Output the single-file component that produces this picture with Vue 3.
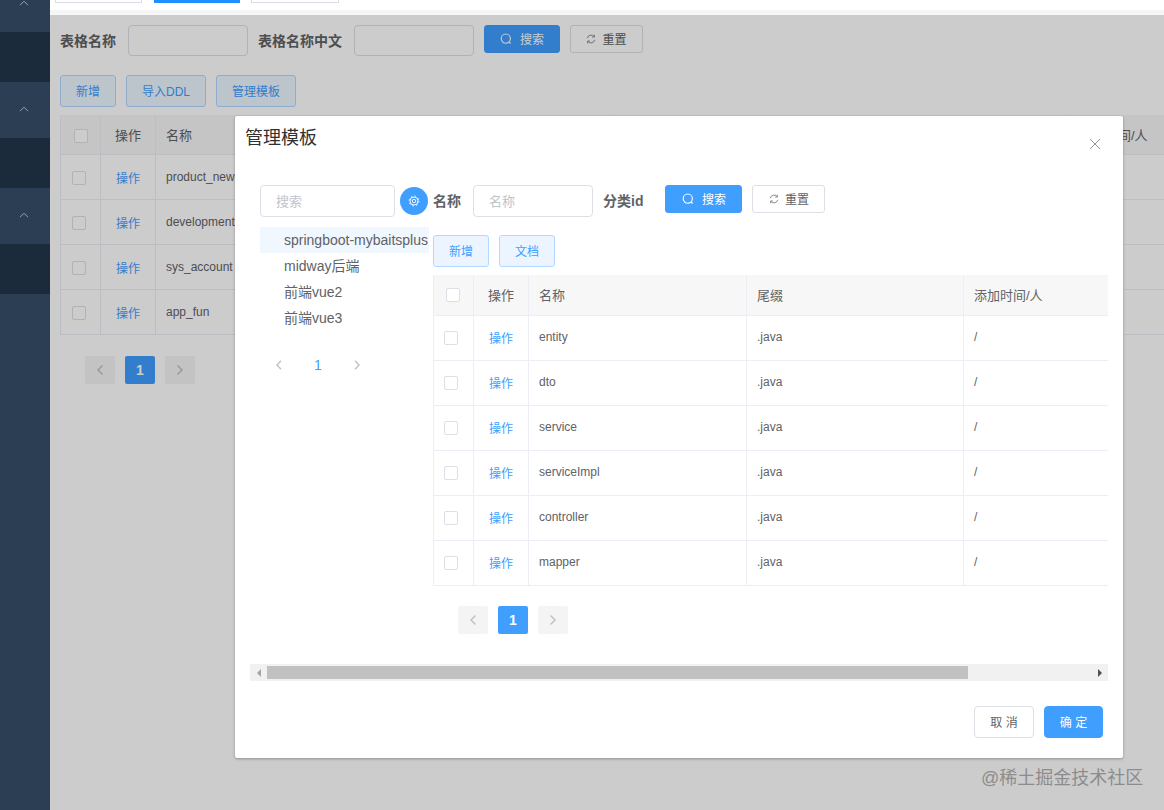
<script setup>
const sideBlocks = [
  { cls: 'light', h: 32, chevron: 'chev-top' },
  { cls: 'dark', h: 50 },
  { cls: 'light', h: 56, chevron: 'chev-mid' },
  { cls: 'dark', h: 50 },
  { cls: 'light', h: 56, chevron: 'chev-mid' },
  { cls: 'dark', h: 50 },
  { cls: 'light', h: 516 }
]
const bgRows = ['product_new', 'development', 'sys_account', 'app_fun']
const tplRows = ['entity', 'dto', 'service', 'serviceImpl', 'controller', 'mapper']
const tree = ['springboot-mybaitsplus', 'midway后端', '前端vue2', '前端vue3']
</script>

<template>
  <div class="page">
    <aside class="side">
      <div v-for="(b, i) in sideBlocks" :key="i" class="side-block" :class="[b.cls, 'h' + b.h]">
        <svg v-if="b.chevron" class="side-chev" :class="b.chevron" width="10" height="6" viewBox="0 0 10 6">
          <path d="M1 5.2 5 1.2l4 4" fill="none" stroke="#c3cbd6" stroke-width="1" />
        </svg>
      </div>
    </aside>

    <main class="main">
      <div class="content">
        <div class="form-row">
          <label class="lbl">表格名称</label>
          <div class="inp w120"></div>
          <label class="lbl second">表格名称中文</label>
          <div class="inp w120"></div>
          <button class="btn primary search-bg">
            <svg class="ic" width="12" height="12" viewBox="0 0 12 12"><circle cx="5.8" cy="5.6" r="4.6" fill="none" stroke="currentColor" stroke-width="1.1" /><path d="M9.2 9 10.6 10.5" stroke="currentColor" stroke-width="1.1" /></svg>
            搜索
          </button>
          <button class="btn reset-bg">
            <svg class="ic" width="10" height="10" viewBox="0 0 12 12"><path d="M1.6 5A4.6 4.6 0 0 1 9.8 3.2M10.4 7A4.6 4.6 0 0 1 2.2 8.8" fill="none" stroke="currentColor" stroke-width="1.1" /><path d="M10 .8v2.8H7.4M2 11.2V8.4h2.6" fill="none" stroke="currentColor" stroke-width="1.1" /></svg>
            重置
          </button>
        </div>
        <div class="tools bg-tools">
          <button class="btn plain w56">新增</button>
          <button class="btn plain w80">导入DDL</button>
          <button class="btn plain w80">管理模板</button>
        </div>
        <div class="table bg-table">
          <div class="tr th bg-cols">
            <div class="td center"><span class="cb head-cb"></span></div>
            <div class="td center">操作</div>
            <div class="td pad">名称</div>
            <div class="td pad"></div>
            <div class="td pad">添加时间/人</div>
          </div>
          <div v-for="r in bgRows" :key="r" class="tr bg-cols">
            <div class="td center"><span class="cb row-cb"></span></div>
            <div class="td center link">操作</div>
            <div class="td pad">{{ r }}</div>
            <div class="td pad"></div>
            <div class="td pad"></div>
          </div>
        </div>
        <div class="pager bg-pager">
          <span class="pg"><svg width="8" height="12" viewBox="0 0 8 12"><path d="M6.5 1.5 2 6l4.5 4.5" fill="none" stroke="currentColor" stroke-width="1.6" /></svg></span>
          <span class="pg active">1</span>
          <span class="pg"><svg width="8" height="12" viewBox="0 0 8 12"><path d="M1.5 1.5 6 6l-4.5 4.5" fill="none" stroke="currentColor" stroke-width="1.6" /></svg></span>
        </div>
      </div>
    </main>

    <div class="mask"></div>

    <header class="topbar">
      <span class="tab tab-a"></span>
      <span class="tab tab-b"></span>
      <span class="tab tab-c"></span>
    </header>

    <section class="modal">
      <div class="m-head">管理模板</div>
      <svg class="close" width="12" height="12" viewBox="0 0 12 12"><path d="M1 1l10 10M11 1 1 11" stroke="#909399" stroke-width="1" fill="none" /></svg>

      <div class="m-scroll">
        <div class="m-content">
          <div class="left">
            <div class="left-top">
              <div class="inp w135"><span class="ph">搜索</span></div>
              <span class="gear">
                <svg width="12" height="12" viewBox="0 0 12 12"><circle cx="6" cy="6" r="4" fill="none" stroke="#fff" stroke-width=".9" /><circle cx="6" cy="6" r="4.9" fill="none" stroke="#fff" stroke-width="1" stroke-dasharray="1.5 2.35" /><circle cx="6" cy="6" r="1.7" fill="none" stroke="#fff" stroke-width=".9" /></svg>
              </span>
            </div>
            <ul class="tree">
              <li v-for="(t, i) in tree" :key="t" :class="{ current: i === 0 }">{{ t }}</li>
            </ul>
            <div class="mini-pager">
              <span><svg width="8" height="12" viewBox="0 0 8 12"><path d="M6 1.8 2 6l4 4.2" fill="none" stroke="#c0c4cc" stroke-width="1.5" /></svg></span>
              <span class="mini-num">1</span>
              <span><svg width="8" height="12" viewBox="0 0 8 12"><path d="M2 1.8 6 6l-4 4.2" fill="none" stroke="#c0c4cc" stroke-width="1.5" /></svg></span>
            </div>
          </div>

          <div class="right">
            <div class="form-row">
              <label class="lbl">名称</label>
              <div class="inp w120 tall"><span class="ph">名称</span></div>
              <label class="lbl second cat">分类id</label>
              <button class="btn primary search-m">
                <svg class="ic" width="12" height="12" viewBox="0 0 12 12"><circle cx="5.8" cy="5.6" r="4.6" fill="none" stroke="currentColor" stroke-width="1.1" /><path d="M9.2 9 10.6 10.5" stroke="currentColor" stroke-width="1.1" /></svg>
                搜索
              </button>
              <button class="btn reset-bg">
                <svg class="ic" width="10" height="10" viewBox="0 0 12 12"><path d="M1.6 5A4.6 4.6 0 0 1 9.8 3.2M10.4 7A4.6 4.6 0 0 1 2.2 8.8" fill="none" stroke="currentColor" stroke-width="1.1" /><path d="M10 .8v2.8H7.4M2 11.2V8.4h2.6" fill="none" stroke="currentColor" stroke-width="1.1" /></svg>
                重置
              </button>
            </div>
            <div class="tools m-tools">
              <button class="btn plain w56">新增</button>
              <button class="btn plain w56">文档</button>
            </div>
            <div class="table m-table">
              <div class="tr th m-cols">
                <div class="td center"><span class="cb head-cb"></span></div>
                <div class="td center">操作</div>
                <div class="td pad">名称</div>
                <div class="td pad">尾缀</div>
                <div class="td pad">添加时间/人</div>
              </div>
              <div v-for="r in tplRows" :key="r" class="tr m-cols">
                <div class="td center"><span class="cb row-cb"></span></div>
                <div class="td center link">操作</div>
                <div class="td pad">{{ r }}</div>
                <div class="td pad">.java</div>
                <div class="td pad">/</div>
              </div>
            </div>
            <div class="pager m-pager">
              <span class="pg"><svg width="8" height="12" viewBox="0 0 8 12"><path d="M6.5 1.5 2 6l4.5 4.5" fill="none" stroke="currentColor" stroke-width="1.6" /></svg></span>
              <span class="pg active">1</span>
              <span class="pg"><svg width="8" height="12" viewBox="0 0 8 12"><path d="M1.5 1.5 6 6l-4.5 4.5" fill="none" stroke="currentColor" stroke-width="1.6" /></svg></span>
            </div>
          </div>
        </div>
        <div class="scrollbar">
          <span class="sb-btn"><i class="arrow-l"></i></span>
          <span class="sb-thumb"></span>
          <span class="sb-rest"></span>
          <span class="sb-btn"><i class="arrow-r"></i></span>
        </div>
      </div>

      <div class="m-foot">
        <button class="btn foot">取 消</button>
        <button class="btn foot primary ok">确 定</button>
      </div>
    </section>

    <div class="watermark">@稀土掘金技术社区</div>
  </div>
</template>

<style>
html, body { margin: 0; overflow: hidden; }
</style>

<style scoped>
.page {
  position: relative;
  width: 1164px;
  height: 810px;
  overflow: hidden;
  display: flex;
  background: #fff;
  font-family: "Liberation Sans", "Noto Sans CJK SC", sans-serif;
  font-size: 12px;
  color: #606266;
}
.side { width: 50px; flex: none; display: flex; flex-direction: column; }
.side-block { position: relative; display: flex; justify-content: center; }
.light { background: #384e69; }
.dark { background: #23364b; }
.h32 { height: 32px; }
.h50 { height: 50px; }
.h56 { height: 56px; }
.h516 { height: 516px; }
.side-chev { position: absolute; left: 19px; }
.chev-top { top: 0; }
.chev-mid { top: 24px; }

.main { flex: 1; min-width: 0; }
.content { padding: 25px 0 0 10px; }

.topbar {
  position: absolute;
  left: 50px;
  top: 0;
  width: 1114px;
  height: 15px;
  background: linear-gradient(#fff 10px, #f4f4f4 10px, #f8f8f8 15px);
  display: flex;
  padding-left: 5px;
  box-sizing: border-box;
  z-index: 2;
}
.tab {
  display: block;
  height: 3px;
  box-sizing: border-box;
  border: 1px solid #d8dce5;
  border-top: 0;
}
.tab-a { width: 87px; }
.tab-b { background: #1e90ff; border-color: #1e90ff; width: 86px; margin-left: 12px; }
.tab-c { width: 88px; margin-left: 11px; }

.mask {
  position: absolute;
  inset: 0;
  background: rgba(0, 0, 0, .2);
  z-index: 1;
}

.form-row { display: flex; align-items: flex-start; }
.lbl {
  font-size: 14px;
  font-weight: 700;
  line-height: 32px;
  margin-right: 12px;
  white-space: nowrap;
}
.lbl.second { margin-left: 10px; }
.lbl.cat { margin-right: 22px; }
.inp {
  box-sizing: border-box;
  height: 31px;
  border: 1px solid #dcdfe6;
  border-radius: 4px;
  background: #fff;
  display: flex;
  align-items: center;
  padding: 0 0 2px 15px;
  flex: none;
}
.tall, .w135 { height: 32px; }
.w120 { width: 120px; }
.w135 { width: 135px; }
.ph { font-size: 13px; color: #c0c4cc; }

.btn {
  box-sizing: border-box;
  height: 28px;
  border: 1px solid #dcdfe6;
  border-radius: 3px;
  background: #fff;
  color: #606266;
  font: inherit;
  font-size: 12px;
  padding: 0 0 2px;
  display: inline-flex;
  align-items: center;
  justify-content: center;
  white-space: nowrap;
  flex: none;
}
.primary { background: #409eff; border-color: #409eff; color: #fff; }
.ic { margin: 2px 8px 0 0; flex: none; }
.search-bg { width: 76px; margin-left: 10px; }
.search-m { width: 77px; }
.reset-bg { width: 73px; margin-left: 10px; }
.reset-bg .ic { margin-right: 6px; color: #7d8087; }
.plain {
  height: 32px;
  background: #ecf5ff;
  border-color: #b3d8ff;
  color: #409eff;
}
.w56 { width: 56px; }
.w80 { width: 80px; }
.tools { display: flex; gap: 10px; }
.bg-tools { margin-top: 18px; }
.m-tools { margin-top: 18px; }

.table { border-left: 1px solid #ebeef5; }
.bg-table { margin-top: 8px; width: 1200px; }
.m-table { margin-top: 8px; width: 675px; box-sizing: border-box; }
.tr { display: grid; height: 45px; border-bottom: 1px solid #ebeef5; box-sizing: border-box; }
.bg-cols { grid-template-columns: 40px 55px 460px 453px 192px; }
.m-cols { grid-template-columns: 40px 55px 218px 217px 144px; }
.th { height: 40px; background: #f7f7f7; font-size: 13px; }
.m-table .th { height: 41px; }
.td {
  border-right: 1px solid #ebeef5;
  display: flex;
  align-items: center;
  min-width: 0;
  overflow: hidden;
  white-space: nowrap;
}
.td:last-child { border-right: 0; }
.m-table .td:not(:first-child) { padding-bottom: 2px; }
.center { justify-content: center; }
.pad { padding-left: 10px; }
.link { color: #409eff; }
.cb {
  display: block;
  box-sizing: border-box;
  width: 14px;
  height: 14px;
  border: 1px solid #dcdfe6;
  border-radius: 2px;
  background: #fff;
}
.row-cb { margin-right: 4px; }
.bg-table .cb { margin-top: 2px; }
.m-table .head-cb { margin-right: 2px; }
.m-table .row-cb { margin-right: 6px; }

.pager { display: flex; gap: 10px; }
.bg-pager { margin: 21px 0 0 25px; }
.m-pager { margin: 20px 0 0 25px; }
.pg {
  width: 30px;
  height: 28px;
  border-radius: 2px;
  background: #f4f4f5;
  color: #c0c4cc;
  display: flex;
  align-items: center;
  justify-content: center;
  font-size: 14px;
  font-weight: 700;
}
.pg.active { background: #409eff; color: #fff; }

.modal {
  position: absolute;
  left: 235px;
  top: 116px;
  width: 888px;
  height: 642px;
  background: #fff;
  border-radius: 2px;
  box-shadow: 0 1px 3px rgba(0, 0, 0, .3);
  z-index: 3;
  display: flex;
  flex-direction: column;
}
.m-head {
  height: 59px;
  padding: 10px 0 0 10px;
  font-size: 18px;
  line-height: 24px;
  color: #303133;
  flex: none;
}
.close { position: absolute; right: 22px; top: 22px; }
.m-scroll { margin: 0 15px; width: 858px; flex: none; }
.m-content { display: flex; height: 479px; padding-left: 10px; box-sizing: border-box; overflow: hidden; }
.left { width: 173px; flex: none; }
.left-top { display: flex; gap: 5px; }
.gear {
  width: 28px;
  height: 28px;
  margin-top: 2px;
  border-radius: 50%;
  background: #409eff;
  display: flex;
  align-items: center;
  justify-content: center;
  flex: none;
}
.tree { list-style: none; margin: 10px 0 0; padding: 0; width: 169px; }
.tree li {
  height: 26px;
  line-height: 26px;
  padding-left: 24px;
  font-size: 14px;
  white-space: nowrap;
}
.tree li.current { background: #f0f7ff; }
.mini-pager { display: flex; gap: 9px; margin: 20px 0 0 4px; }
.mini-pager span {
  width: 30px;
  height: 28px;
  display: flex;
  align-items: center;
  justify-content: center;
}
.mini-num { color: #409eff; font-size: 14px; font-weight: 400; }
.right { width: 675px; flex: none; }

.scrollbar { height: 17px; background: #f1f1f1; display: flex; align-items: center; }
.sb-btn { width: 17px; height: 17px; display: flex; align-items: center; justify-content: center; flex: none; }
.sb-thumb { width: 701px; height: 13px; background: #c1c1c1; flex: none; }
.sb-rest { flex: 1; }
.arrow-l, .arrow-r { display: block; width: 0; height: 0; border-top: 4px solid transparent; border-bottom: 4px solid transparent; }
.arrow-l { border-right: 4px solid #a3a3a3; }
.arrow-r { border-left: 4px solid #505050; }

.m-foot { margin-top: 25px; padding-right: 20px; display: flex; justify-content: flex-end; gap: 10px; }
.foot { width: 60px; height: 32px; border-radius: 4px; }
.ok { width: 59px; }

.watermark {
  position: absolute;
  left: 981px;
  top: 766px;
  font-size: 18px;
  line-height: 24px;
  color: #8c8c8c;
  white-space: nowrap;
  z-index: 4;
}
</style>
